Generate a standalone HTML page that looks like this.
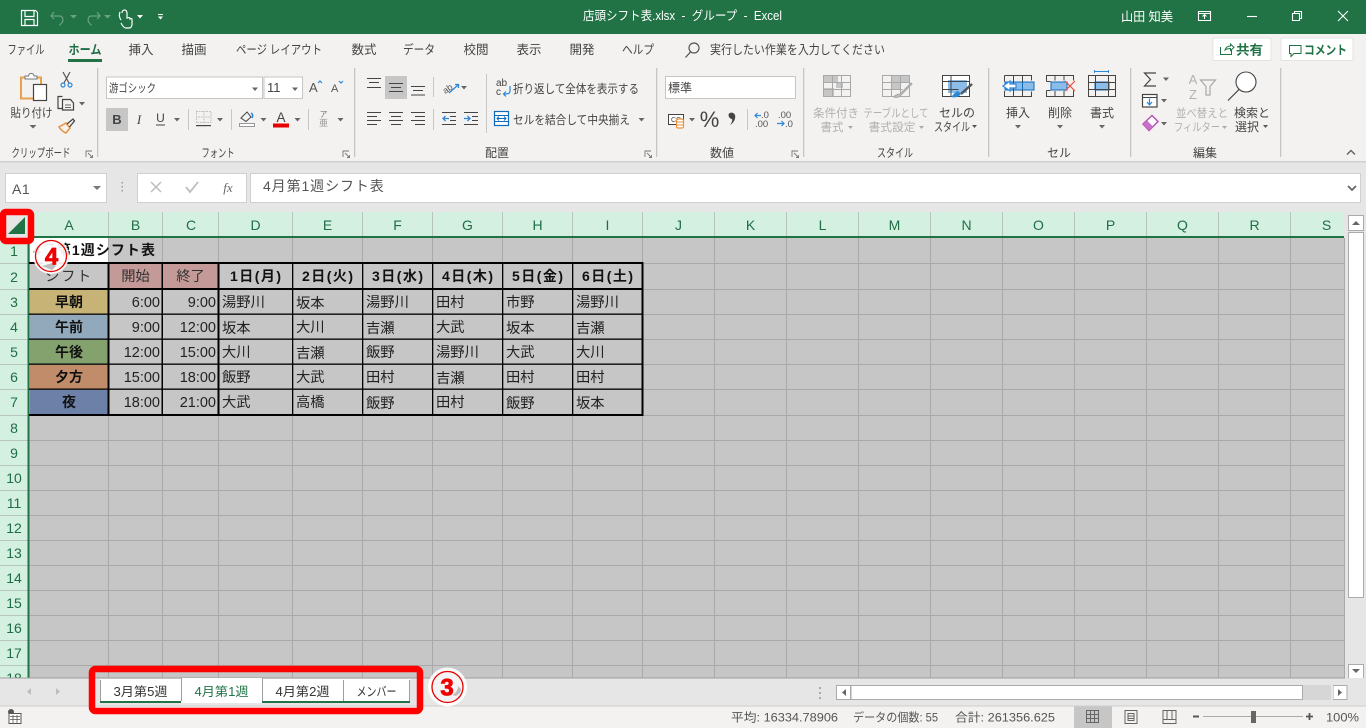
<!DOCTYPE html>
<html lang="ja"><head><meta charset="utf-8"><title>店頭シフト表.xlsx - グループ - Excel</title>
<style>
html,body{margin:0;padding:0;width:1366px;height:728px;overflow:hidden;background:#e6e6e6}
svg{display:block;font-family:"Liberation Sans","Noto Sans CJK JP",sans-serif}
.m{text-anchor:middle}.e{text-anchor:end}
.rb text{font-size:12px;fill:#444}
.g text{font-size:11.5px;fill:#b1b1b1}
.hd text{font-size:14px;fill:#1f6e45;text-anchor:middle}
.c text{font-size:14.3px;fill:#222}
.b text{font-weight:bold;fill:#111;text-anchor:middle}
.n text{font-size:14.5px;fill:#222;text-anchor:end}
.k{fill:none;stroke:#444;stroke-width:1.2}
.car{fill:#666}
</style></head><body>
<svg width="1366" height="728" viewBox="0 0 1366 728" xmlns="http://www.w3.org/2000/svg">
<!-- backgrounds -->
<rect width="1366" height="728" fill="#e6e6e6"/>
<rect width="1366" height="34" fill="#217346"/>
<rect y="34" width="1366" height="127" fill="#f3f2f1"/>
<rect y="161" width="1366" height="1" fill="#cfcfcf"/><rect y="162" width="1366" height="1" fill="#dcdcdc"/>

<!-- title bar -->
<g fill="none" stroke="#fff" stroke-width="1.2">
<path d="M21.5 10.5h14l2 2v13h-16zM25 10.5v6h9v-6M25 25.5v-6h9v6"/>
<path d="M54 12l-3 4 3 3M51.5 16h8c3 0 4 3 3 6l-3 3.5" stroke="#6aa283"/>
<path d="M97 12l3 4-3 3M99.5 16h-8c-3 0-4 3-3 6l3 3.5" stroke="#6aa283"/>
<path d="M122 13c0-4 5-4 5 0v5c3-1 3 0 3 1 2-1 2 0 2 1v4c0 2-1 4-3 4h-3c-2 0-4-3-5-5M120 12c-1 3-1 5 1 8"/>
</g>
<g fill="#6aa283"><path d="M70 15h7l-3.500 3.500zM104 15h7l-3.500 3.500z"/></g>
<g fill="#fff"><path d="M137 15h6l-3 3.500zM158 14h5v1h-5zM158 16.500h5l-2.500 3z"/></g>
<text x="583" y="20" font-size="12.500" fill="#fff" textLength="199" lengthAdjust="spacingAndGlyphs">店頭シフト表.xlsx&#160;&#160;-&#160;&#160;グループ&#160;&#160;-&#160;&#160;Excel</text>
<text x="1121" y="21" font-size="12.500" fill="#fff" textLength="52" lengthAdjust="spacingAndGlyphs">山田 知美</text>
<g fill="none" stroke="#fff" stroke-width="1.100">
<path d="M1198.500 11.500h12v9h-12zM1198.500 13.500h12M1204.500 19v-4M1202.500 16.500l2-2 2 2"/>
<path d="M1247 16.500h10"/>
<path d="M1292.500 13.500h7v7h-7zM1294.500 13.500v-2h7v7h-2"/>
<path d="M1338 11l10 10M1348 11l-10 10"/>
</g>

<!-- tabs -->
<g font-size="12.500" fill="#444">
<text x="26" y="54" class="m" textLength="37" lengthAdjust="spacingAndGlyphs">ファイル</text>
<text x="85" y="54" class="m" font-weight="bold" fill="#1f6e45" textLength="33" lengthAdjust="spacingAndGlyphs">ホーム</text>
<text x="141" y="54" class="m">挿入</text>
<text x="194" y="54" class="m">描画</text>
<text x="279" y="54" class="m" textLength="86" lengthAdjust="spacingAndGlyphs">ページ&#160;レイアウト</text>
<text x="364" y="54" class="m">数式</text>
<text x="419" y="54" class="m" textLength="32" lengthAdjust="spacingAndGlyphs">データ</text>
<text x="476" y="54" class="m">校閲</text>
<text x="529" y="54" class="m">表示</text>
<text x="582" y="54" class="m">開発</text>
<text x="638" y="54" class="m" textLength="32" lengthAdjust="spacingAndGlyphs">ヘルプ</text>
<text x="710" y="54" textLength="175" lengthAdjust="spacingAndGlyphs">実行したい作業を入力してください</text>
</g>
<rect x="68" y="59" width="34" height="3" fill="#217346"/>
<circle cx="694" cy="48" r="5" fill="none" stroke="#555" stroke-width="1.200"/><path d="M690.500 52l-5 5.500" stroke="#555" stroke-width="1.300"/>
<rect x="1213" y="38" width="58" height="22.500" rx="1.500" fill="#fff" stroke="#e4e3e2"/>
<rect x="1281" y="38" width="72" height="22.500" rx="1.500" fill="#fff" stroke="#e4e3e2"/>
<path d="M1220.500 47v7.500h11V50M1225 50c1-3 3-4 5.500-4V44l3.500 3.500-3.500 3v-2c-2 0-4 .5-5.500 1.500z" fill="none" stroke="#217346" stroke-width="1"/>
<text x="1236" y="54.500" font-size="13" font-weight="bold" fill="#217346" textLength="27" lengthAdjust="spacingAndGlyphs">共有</text>
<path d="M1289.500 45.500h11.500v8h-7l-3 3v-3h-1.500z" fill="none" stroke="#217346" stroke-width="1"/>
<text x="1304" y="54.500" font-size="12.500" font-weight="bold" fill="#217346" textLength="43" lengthAdjust="spacingAndGlyphs">コメント</text>

<!-- group separators -->
<g fill="#c6c6c6"><rect x="97" y="68" width="1.300" height="89"/><rect x="354" y="68" width="1.300" height="89"/><rect x="656" y="68" width="1.300" height="89"/><rect x="803" y="68" width="1.300" height="89"/><rect x="988" y="68" width="1.300" height="89"/><rect x="1130" y="68" width="1.300" height="89"/><rect x="1280" y="68" width="1.300" height="89"/>
<rect x="188" y="109" width="1" height="21"/><rect x="231" y="109" width="1" height="21"/><rect x="308" y="109" width="1" height="21"/><rect x="433" y="77" width="1" height="20"/><rect x="433" y="109" width="1" height="21"/><rect x="486" y="74" width="1" height="59"/><rect x="747" y="109" width="1" height="21"/></g>

<g class="rb">
<!-- group labels -->
<text x="41" y="157" class="m" textLength="59" lengthAdjust="spacingAndGlyphs">クリップボード</text>
<text x="218" y="157" class="m" textLength="33" lengthAdjust="spacingAndGlyphs">フォント</text>
<text x="497" y="157" class="m">配置</text>
<text x="722" y="157" class="m">数値</text>
<text x="895" y="157" class="m" textLength="36" lengthAdjust="spacingAndGlyphs">スタイル</text>
<text x="1059" y="157" class="m">セル</text>
<text x="1205" y="157" class="m">編集</text>
<!-- clipboard -->
<text x="31.500" y="117" class="m" textLength="42" lengthAdjust="spacingAndGlyphs">貼り付け</text>
<text x="513" y="93" textLength="126" lengthAdjust="spacingAndGlyphs">折り返して全体を表示する</text>
<text x="513" y="124" textLength="117" lengthAdjust="spacingAndGlyphs">セルを結合して中央揃え</text>
<text x="957" y="117" class="m">セルの</text>
<text x="952" y="131" class="m" textLength="36" lengthAdjust="spacingAndGlyphs">スタイル</text>
<text x="1018" y="117" class="m">挿入</text>
<text x="1060" y="117" class="m">削除</text>
<text x="1102" y="117" class="m">書式</text>
<text x="1252" y="117" class="m">検索と</text>
<text x="1247" y="131" class="m">選択</text>
</g>
<g class="g">
<text x="836" y="117" class="m" textLength="46" lengthAdjust="spacingAndGlyphs">条件付き</text>
<text x="832" y="131" class="m">書式</text>
<text x="896" y="117" class="m" textLength="65" lengthAdjust="spacingAndGlyphs">テーブルとして</text>
<text x="892" y="131" class="m" textLength="47" lengthAdjust="spacingAndGlyphs">書式設定</text>
<text x="1202" y="117" class="m" textLength="52" lengthAdjust="spacingAndGlyphs">並べ替えと</text>
<text x="1197" y="131" class="m" textLength="46" lengthAdjust="spacingAndGlyphs">フィルター</text>
</g>

<!-- paste icon -->
<path d="M21 77.500h20v21H21z" fill="#f3f2f1" stroke="#e8a04c" stroke-width="2"/>
<path d="M25 79v-3h3.500c.5-3.500 5-3.500 5.500 0H37v3z" fill="#fff" stroke="#777"/>
<rect x="33.500" y="84.500" width="13" height="16" fill="#fff" stroke="#444" stroke-width="1.200"/>
<!-- scissors -->
<path d="M63 72l6 11M70 72l-6 11" stroke="#555" fill="none" stroke-width="1.200"/>
<circle cx="63" cy="85" r="2" fill="none" stroke="#2b88d8" stroke-width="1.200"/><circle cx="70" cy="85" r="2" fill="none" stroke="#2b88d8" stroke-width="1.200"/>
<!-- copy -->
<path d="M62.500 96.500h-4.500v12h4M62.500 99.500v10.500h11v-7l-3-3.500z" fill="none" stroke="#444" stroke-width="1.200"/><path d="M65 105h6M65 107.500h6" stroke="#666"/>
<!-- painter -->
<path d="M59 127l7-4 4 5-4 5c-3-1-5-3-7-6z" fill="none" stroke="#e8923c" stroke-width="1.500"/>
<path d="M67 124l6-5 1.500 2-5 6" fill="none" stroke="#444" stroke-width="1.300"/>
<!-- font boxes -->
<rect x="106.500" y="77" width="156" height="21.500" fill="#fff" stroke="#c6c6c6"/>
<rect x="264" y="77" width="38.500" height="21.500" fill="#fff" stroke="#c6c6c6"/>
<text x="109" y="92" font-size="11.500" fill="#444" textLength="47" lengthAdjust="spacingAndGlyphs">游ゴシック</text>
<text x="267" y="92" font-size="13" fill="#444">11</text>
<text x="309" y="92" font-size="13" fill="#555">A</text><path d="M318 83l2-2 2 2" class="k" stroke-width="1" style="stroke:#2b88d8"/>
<text x="331" y="92" font-size="11" fill="#555">A</text><path d="M339 81l2 2 2-2" class="k" style="stroke:#2b88d8"/>
<rect x="106" y="108" width="22" height="23" fill="#c6c6c6"/>
<text x="117" y="124" class="m" font-size="13" font-weight="bold" fill="#444">B</text>
<text x="139" y="124" class="m" font-size="13" font-style="italic" fill="#444" font-family="Liberation Serif">I</text>
<text x="160.500" y="122" class="m" font-size="12" fill="#444">U</text><rect x="156" y="124.500" width="9" height="1" fill="#444"/>
<path d="M196.500 111.500h14.500v11h-14.500z" fill="none" stroke="#bbb" stroke-dasharray="1.500 1"/><path d="M204 111v12M196 117h15" stroke="#bbb" stroke-dasharray="1.500 1"/><rect x="196" y="125" width="15" height="1.200" fill="#444"/>
<path d="M241 118l6-6 4 5-5 4.500z" fill="none" stroke="#444"/><path d="M251 113c2 1 2 3 1 5" stroke="#2b88d8" fill="none" stroke-width="1.500"/><rect x="239.500" y="123.500" width="15" height="3" fill="#fff" stroke="#999"/>
<text x="281" y="122" class="m" font-size="13.500" fill="#444">A</text><rect x="273" y="123.500" width="16" height="4" fill="#e60000"/>
<text x="323.500" y="117" class="m" font-size="8" fill="#777">ア</text><text x="323.500" y="126" class="m" font-size="9" fill="#999">亜</text>
<!-- carets -->
<path class="car" d="M29.500 125h7l-3.500 3.500zM79 102h6l-3 3.500zM252 87.500h6l-3 3.500zM292 87.500h6l-3 3.500zM174 118h6l-3 3.500zM217 118h6l-3 3.500zM260.500 118h6l-3 3.500zM294.500 118h6l-3 3.500zM337.500 118h6l-3 3.500zM461 86h6l-3 3.500zM638.500 118h6l-3 3.500zM785 87.500h6l-3 3.500zM689 118h6l-3 3.500zM1015 125h6l-3 3.500zM1057 125h6l-3 3.500zM1099 125h6l-3 3.500zM1163 77.500h6l-3 3.500zM1161 99h6l-3 3.500zM1161 122h6l-3 3.500z"/>
<path fill="#aaa" d="M848 126h5l-2.500 3zM919 126h5l-2.500 3zM1222 126h5l-2.500 3z"/>
<path fill="#555" d="M972 125h5l-2.500 3zM1263 125h5l-2.500 3z"/>
<!-- align icons -->
<rect x="385" y="76" width="22" height="23" fill="#c6c6c6"/>
<path stroke="#444" stroke-width="1.100" fill="none" d="M367 78.500h14M369 82.500h10M367 87.500h14M389 83.500h14M391 87.500h10M389 91.500h14M411 86.500h14M413 90.500h10M411 95h14
M367 112.500h14M367 116.500h10M367 120.500h14M367 124.500h10M389 112.500h14M391 116.500h10M389 120.500h14M391 124.500h10M411 112.500h14M415 116.500h10M411 120.500h14M415 124.500h10
M442 112.500h14M450 116.500h6M450 120.500h6M442 124.500h14M464 112.500h14M472 116.500h6M472 120.500h6M464 124.500h14"/>
<path stroke="#2b88d8" stroke-width="1.300" fill="none" d="M449 118.500h-6M445.500 116l-2.500 2.500 2.500 2.500M464 118.500h6M467.500 116l2.500 2.500-2.500 2.500"/>
<text x="442" y="92" font-size="9" fill="#555" transform="rotate(-35 447 88)">ab</text><path d="M449 93l9-8M455 84.500h3.500V88" fill="none" stroke="#2b88d8" stroke-width="1.300"/>
<!-- wrap -->
<text x="496" y="86" font-size="10" fill="#444">ab</text><text x="496" y="95" font-size="10" fill="#444">c</text><path d="M510 86v5c0 3-3 3-6 3M506 91.500l-2.500 2.500 2.500 2.500" fill="none" stroke="#2b88d8" stroke-width="1.200"/>
<!-- merge -->
<rect x="494.500" y="111.500" width="14" height="14" fill="#fff" stroke="#0f6cbd" stroke-width="1.200"/><path d="M494.500 115.500h14M494.500 121.500h14" stroke="#0f6cbd"/><path d="M497 118.500h9M499 116.500l-2 2 2 2M504 116.500l2 2-2 2" fill="none" stroke="#0f6cbd"/>
<!-- number -->
<rect x="665.500" y="76.500" width="130" height="22" fill="#fff" stroke="#c6c6c6"/>
<text x="668" y="92" font-size="12" fill="#444">標準</text>
<rect x="668.500" y="114.500" width="15" height="10" fill="#fff" stroke="#444"/><text x="671" y="122" font-size="7" fill="#444">CC</text>
<rect x="676.500" y="119" width="7" height="9" rx="1.500" fill="#fff" stroke="#e8923c" stroke-width="1.200"/><path d="M676.500 122h7M676.500 125h7" stroke="#e8923c"/>
<text x="709.500" y="127" class="m" font-size="22" fill="#444">%</text>
<path d="M729 113.500c2-1.500 5-1 6 1.500 1 3-1 8-5 10 2-2.500 2.500-4.500 2-6-2 0-4.500-3-3-5.500z" fill="#444"/>
<text x="761" y="118" font-size="9.500" fill="#555">.0</text><text x="755" y="127" font-size="9.500" fill="#555">.00</text><path d="M761 115.500h-6M757.500 113l-2.500 2.500 2.500 2.500" stroke="#2b88d8" fill="none" stroke-width="1.200"/>
<text x="778" y="118" font-size="9.500" fill="#555">.00</text><text x="785" y="127" font-size="9.500" fill="#555">.0</text><path d="M777 123.500h7M781.500 121l2.500 2.500-2.500 2.500" stroke="#2b88d8" fill="none" stroke-width="1.200"/>
<!-- dialog launchers -->
<g fill="none" stroke="#777" stroke-width=".9"><path d="M86 157v-6h6M88 153l4 4M90 157.500h2.500V155"/><path d="M343 157v-6h6M345 153l4 4M347 157.500h2.500V155"/><path d="M645 157v-6h6M647 153l4 4M649 157.500h2.500V155"/><path d="M792 157v-6h6M794 153l4 4M796 157.500h2.500V155"/></g>
<!-- styles icons -->
<rect x="824" y="76" width="14" height="6" fill="#c6c6c6"/><rect x="824" y="88" width="10" height="8" fill="#c6c6c6"/><rect x="836" y="82" width="7" height="6" fill="#c6c6c6"/>
<path d="M823.500 75.500h27v21h-27zM823.500 82.500h27M823.500 89.500h27M832.500 75.500v21M841.500 75.500v21" fill="none" stroke="#a8a8a8"/>
<rect x="892" y="76" width="18" height="6" fill="#c6c6c6"/><rect x="892" y="82" width="9" height="7" fill="#c6c6c6"/>
<path d="M882.500 75.500h27v21h-27zM882.500 82.500h27M882.500 89.500h20M891.500 75.500v21M900.500 75.500v21" fill="none" stroke="#a8a8a8"/>
<path d="M911 83l-11 11c-2 0-5 1-6 3 3 1 6 0 8-3l10-10z" fill="#bdbdbd" stroke="#a8a8a8"/>
<rect x="942.500" y="75.500" width="27" height="21" fill="#fff" stroke="#444"/><rect x="948" y="80" width="19" height="13" fill="#8cbdea"/>
<path d="M942.500 81.500h27M942.500 89.500h16M951 75.500v21" stroke="#444" fill="none"/>
<path d="M972 84l-11 10" stroke="#555" stroke-width="2.500"/><path d="M958 91c-3 1-4 3-7 6 4 1 8 0 10-3z" fill="#2b88d8"/>
<!-- cell icons -->
<rect x="1005" y="82" width="29" height="8" fill="#8cbdea" stroke="#0f6cbd"/>
<path d="M1004.500 75.500h27v5M1004.500 91v5.500h27v-5M1013.500 75.500v21M1022.500 75.500v21M1004.500 75.500v6" fill="none" stroke="#444"/>
<path d="M1022.500 82v8" stroke="#0f6cbd"/>
<path d="M1003 86l7-5v3h6v4h-6v3z" fill="#fff" stroke="#2b88d8" stroke-width="1.200"/>
<rect x="1051" y="82" width="16" height="8" fill="#8cbdea" stroke="#0f6cbd"/>
<path d="M1046.500 81.500v-6h27v5M1046.500 90.500v6h27v-6M1046.500 81.500h4M1046.500 90.500h4M1055 75.500v5M1064 75.500v5M1055 91v6M1064 91v6" fill="none" stroke="#444"/>
<path d="M1065 81l10 10M1075 81l-10 10" stroke="#e74c3c" stroke-width="1.200"/>
<path d="M1094.500 71.500h14M1094.500 70v3M1108.500 70v3" stroke="#2b88d8"/>
<rect x="1095" y="82" width="14" height="8" fill="#8cbdea" stroke="#0f6cbd"/>
<path d="M1088.500 75.500h27v21h-27zM1088.500 82.500h27M1088.500 89.500h27M1095.500 75.500v21M1108.500 75.500v21" fill="none" stroke="#444"/>
<!-- editing -->
<path d="M1156 73h-11.500l6 6.500-6 6.500H1156" fill="none" stroke="#444" stroke-width="1.200"/>
<rect x="1142.500" y="94.500" width="14.500" height="12.500" fill="#fff" stroke="#444" stroke-width="1.200"/><path d="M1142 97.500h15" stroke="#444"/><path d="M1149.500 98.500v6M1147 102l2.500 3 2.500-3" fill="none" stroke="#2b88d8" stroke-width="1.200"/>
<path d="M1143 124l9-8.500 6 6-9 9z" fill="#fff" stroke="#b455b4" stroke-width="1.500"/><path d="M1143 124l4-3.500 6 6-4 4z" fill="#c86fc8"/>
<text x="1193" y="84" class="m" font-size="13" fill="#b1b1b1">A</text><text x="1193" y="99" class="m" font-size="13" fill="#b1b1b1">Z</text>
<path d="M1200.500 80h15l-5.500 6.500v8.500h-4v-8.500z" fill="none" stroke="#a8a8a8" stroke-width="1.200"/>
<circle cx="1246" cy="82" r="10" fill="#fff" stroke="#444" stroke-width="1.100"/><path d="M1239 89.500l-11 11" stroke="#444" stroke-width="1.200"/>
<path d="M1347 154.500l4-4 4 4" fill="none" stroke="#666" stroke-width="1.500"/>

<!-- formula bar -->
<rect x="5.500" y="173.500" width="101" height="29" fill="#fff" stroke="#d0d0d0"/>
<text x="12" y="194" font-size="14" fill="#555" letter-spacing=".5">A1</text>
<path d="M93 186h8l-4 4z" fill="#777"/>
<g fill="#9a9a9a"><rect x="121.500" y="182" width="1.500" height="1.500"/><rect x="121.500" y="186" width="1.500" height="1.500"/><rect x="121.500" y="190" width="1.500" height="1.500"/></g>
<rect x="137.500" y="173.500" width="109" height="29" fill="#fff" stroke="#d0d0d0"/>
<path d="M151 182l10 10M161 182l-10 10" stroke="#bdbdbd" stroke-width="1.500"/>
<path d="M186 187l4 5 8-10" fill="none" stroke="#bdbdbd" stroke-width="1.800"/>
<text x="228" y="192" class="m" font-size="13" font-style="italic" fill="#666" font-family="Liberation Serif">fx</text>
<rect x="250.500" y="173.500" width="1110" height="29" fill="#fff" stroke="#d0d0d0"/>
<text x="263" y="191" font-size="14" fill="#555" letter-spacing=".9">4月第1週シフト表</text>
<path d="M1348 186l4 4 4-4" fill="none" stroke="#666" stroke-width="1.800"/>

<!-- column header -->
<rect x="0" y="212" width="1344" height="24" fill="#d3f0e0"/>
<rect x="0" y="238" width="29" height="440" fill="#d3f0e0"/>
<rect x="29" y="238" width="1315" height="440" fill="#c6c6c6"/>
<rect x="0" y="212" width="29" height="24" fill="#e6e6e6"/>
<g fill="#a9a9a9">
<rect x="108" y="238" width="1" height="440"/><rect x="162" y="238" width="1" height="440"/><rect x="218" y="238" width="1" height="440"/><rect x="292" y="238" width="1" height="440"/><rect x="362" y="238" width="1" height="440"/><rect x="432" y="238" width="1" height="440"/><rect x="502" y="238" width="1" height="440"/><rect x="572" y="238" width="1" height="440"/><rect x="642" y="238" width="1" height="440"/><rect x="714" y="238" width="1" height="440"/><rect x="786" y="238" width="1" height="440"/><rect x="858" y="238" width="1" height="440"/><rect x="930" y="238" width="1" height="440"/><rect x="1002" y="238" width="1" height="440"/><rect x="1074" y="238" width="1" height="440"/><rect x="1146" y="238" width="1" height="440"/><rect x="1218" y="238" width="1" height="440"/><rect x="1290" y="238" width="1" height="440"/><rect x="1344" y="238" width="1" height="440"/>
<rect x="29" y="263" width="1315" height="1"/><rect x="29" y="289" width="1315" height="1"/><rect x="29" y="314" width="1315" height="1"/><rect x="29" y="339" width="1315" height="1"/><rect x="29" y="364" width="1315" height="1"/><rect x="29" y="389" width="1315" height="1"/><rect x="29" y="415" width="1315" height="1"/><rect x="29" y="440" width="1315" height="1"/><rect x="29" y="465" width="1315" height="1"/><rect x="29" y="490" width="1315" height="1"/><rect x="29" y="515" width="1315" height="1"/><rect x="29" y="540" width="1315" height="1"/><rect x="29" y="565" width="1315" height="1"/><rect x="29" y="590" width="1315" height="1"/><rect x="29" y="615" width="1315" height="1"/><rect x="29" y="640" width="1315" height="1"/><rect x="29" y="665" width="1315" height="1"/>
</g>
<g fill="#b9c4bd">
<rect x="108" y="212" width="1" height="24"/><rect x="162" y="212" width="1" height="24"/><rect x="218" y="212" width="1" height="24"/><rect x="292" y="212" width="1" height="24"/><rect x="362" y="212" width="1" height="24"/><rect x="432" y="212" width="1" height="24"/><rect x="502" y="212" width="1" height="24"/><rect x="572" y="212" width="1" height="24"/><rect x="642" y="212" width="1" height="24"/><rect x="714" y="212" width="1" height="24"/><rect x="786" y="212" width="1" height="24"/><rect x="858" y="212" width="1" height="24"/><rect x="930" y="212" width="1" height="24"/><rect x="1002" y="212" width="1" height="24"/><rect x="1074" y="212" width="1" height="24"/><rect x="1146" y="212" width="1" height="24"/><rect x="1218" y="212" width="1" height="24"/><rect x="1290" y="212" width="1" height="24"/>
<rect x="0" y="263" width="28" height="1"/><rect x="0" y="289" width="28" height="1"/><rect x="0" y="314" width="28" height="1"/><rect x="0" y="339" width="28" height="1"/><rect x="0" y="364" width="28" height="1"/><rect x="0" y="389" width="28" height="1"/><rect x="0" y="415" width="28" height="1"/><rect x="0" y="440" width="28" height="1"/><rect x="0" y="465" width="28" height="1"/><rect x="0" y="490" width="28" height="1"/><rect x="0" y="515" width="28" height="1"/><rect x="0" y="540" width="28" height="1"/><rect x="0" y="565" width="28" height="1"/><rect x="0" y="590" width="28" height="1"/><rect x="0" y="615" width="28" height="1"/><rect x="0" y="640" width="28" height="1"/><rect x="0" y="665" width="28" height="1"/>
</g>
<rect x="0" y="236" width="1344" height="2" fill="#217346"/>
<rect x="27.500" y="236" width="2" height="442" fill="#217346"/>
<g class="hd">
<text x="69" y="230">A</text><text x="135.500" y="230">B</text><text x="191" y="230">C</text><text x="255.500" y="230">D</text><text x="327.500" y="230">E</text><text x="397.500" y="230">F</text><text x="467.500" y="230">G</text><text x="537.500" y="230">H</text><text x="607.500" y="230">I</text><text x="678.500" y="230">J</text><text x="750.500" y="230">K</text><text x="822.500" y="230">L</text><text x="894.500" y="230">M</text><text x="966.500" y="230">N</text><text x="1038.500" y="230">O</text><text x="1110.500" y="230">P</text><text x="1182.500" y="230">Q</text><text x="1254.500" y="230">R</text><text x="1326.500" y="230">S</text>
<text x="14" y="256">1</text><text x="14" y="282">2</text><text x="14" y="307">3</text><text x="14" y="332">4</text><text x="14" y="357">5</text><text x="14" y="382">6</text><text x="14" y="407">7</text><text x="14" y="433">8</text><text x="14" y="458">9</text><text x="14" y="483">10</text><text x="14" y="508">11</text><text x="14" y="533">12</text><text x="14" y="558">13</text><text x="14" y="583">14</text><text x="14" y="608">15</text><text x="14" y="633">16</text><text x="14" y="658">17</text><text x="14" y="683">18</text>
</g>

<!-- table cells -->
<rect x="30" y="238" width="78" height="25" fill="#fff"/>
<rect x="109" y="264" width="109" height="25" fill="#c49a98"/>
<rect x="30" y="290" width="78" height="24" fill="#c8b377"/>
<rect x="30" y="315" width="78" height="24" fill="#92a8bb"/>
<rect x="30" y="340" width="78" height="24" fill="#84a26d"/>
<rect x="30" y="365" width="78" height="24" fill="#c08c69"/>
<rect x="30" y="390" width="78" height="25" fill="#6d81a8"/>
<text x="33" y="255" font-size="14" font-weight="bold" fill="#111" letter-spacing="1.050">4月第1週シフト表</text>
<g fill="#000">
<rect x="29" y="262" width="613" height="2"/><rect x="29" y="288" width="613" height="2"/>
<rect x="29" y="313.500" width="613" height="1.300"/><rect x="29" y="338.500" width="613" height="1.300"/><rect x="29" y="363.500" width="613" height="1.300"/><rect x="29" y="388.500" width="613" height="1.300"/>
<rect x="29" y="414" width="614" height="2"/>
<rect x="107.500" y="263" width="2" height="152"/><rect x="161.500" y="263" width="1.500" height="152"/><rect x="217.500" y="263" width="2" height="152"/>
<rect x="292" y="263" width="1.300" height="152"/><rect x="362" y="263" width="1.300" height="152"/><rect x="432" y="263" width="1.300" height="152"/><rect x="502" y="263" width="1.300" height="152"/><rect x="572" y="263" width="1.300" height="152"/>
<rect x="641.500" y="262" width="2" height="154"/>
</g>
<text x="69" y="281" class="m" font-size="14.300" fill="#333" letter-spacing="1.500">シフト</text>
<text x="135.500" y="281" class="m" font-size="14.300" fill="#333">開始</text>
<text x="190.500" y="281" class="m" font-size="14.300" fill="#333">終了</text>
<g class="b" font-size="14">
<text x="69" y="307">早朝</text><text x="69" y="332">午前</text><text x="69" y="357">午後</text><text x="69" y="382">夕方</text><text x="69" y="407">夜</text>
<text x="255.500" y="281" textLength="51">1日(月)</text><text x="327.500" y="281" textLength="51">2日(火)</text><text x="397.500" y="281" textLength="51">3日(水)</text><text x="467.500" y="281" textLength="51">4日(木)</text><text x="537.500" y="281" textLength="51">5日(金)</text><text x="607.500" y="281" textLength="51">6日(土)</text>
</g>
<g class="n">
<text x="160" y="307">6:00</text><text x="216" y="307">9:00</text>
<text x="160" y="332">9:00</text><text x="216" y="332">12:00</text>
<text x="160" y="357">12:00</text><text x="216" y="357">15:00</text>
<text x="160" y="382">15:00</text><text x="216" y="382">18:00</text>
<text x="160" y="407">18:00</text><text x="216" y="407">21:00</text>
</g>
<g class="c">
<text x="222" y="307" fill="#444">湯野川</text><text x="296" y="308">坂本</text><text x="366" y="307" fill="#444">湯野川</text><text x="436" y="307" fill="#444">田村</text><text x="506" y="307" fill="#444">市野</text><text x="576" y="307" fill="#444">湯野川</text>
<text x="222" y="333">坂本</text><text x="296" y="332" fill="#444">大川</text><text x="366" y="333">吉瀬</text><text x="436" y="332" fill="#444">大武</text><text x="506" y="333">坂本</text><text x="576" y="333">吉瀬</text>
<text x="222" y="357" fill="#444">大川</text><text x="296" y="358">吉瀬</text><text x="366" y="357" fill="#444">飯野</text><text x="436" y="357" fill="#444">湯野川</text><text x="506" y="357" fill="#444">大武</text><text x="576" y="357" fill="#444">大川</text>
<text x="222" y="382">飯野</text><text x="296" y="382" fill="#444">大武</text><text x="366" y="382" fill="#444">田村</text><text x="436" y="383">吉瀬</text><text x="506" y="382" fill="#444">田村</text><text x="576" y="382" fill="#444">田村</text>
<text x="222" y="407" fill="#444">大武</text><text x="296" y="407" fill="#444">高橋</text><text x="366" y="408">飯野</text><text x="436" y="407" fill="#444">田村</text><text x="506" y="408">飯野</text><text x="576" y="408">坂本</text>
</g>

<!-- vertical scrollbar -->
<rect x="1345" y="212" width="21" height="466" fill="#e6e6e6"/>
<rect x="1348.500" y="215.500" width="15" height="15" fill="#fff" stroke="#ababab"/>
<path d="M1352 225l4-4 4 4z" fill="#666"/>
<rect x="1348.500" y="232.500" width="15" height="365" fill="#fff" stroke="#ababab"/>
<rect x="1348.500" y="664.500" width="15" height="14" fill="#fff" stroke="#ababab"/>
<path d="M1352 669h8l-4 4z" fill="#666"/>

<!-- sheet tab bar -->
<rect x="0" y="678" width="1366" height="28" fill="#e6e6e6"/>
<rect x="0" y="677.500" width="1345" height="1" fill="#9e9e9e"/>
<path d="M31 688v7l-4-3.500zM56 688v7l4-3.500z" fill="#bdbdbd"/>
<rect x="100" y="679" width="310" height="23" fill="#fff"/>
<rect x="100" y="701" width="310" height="2" fill="#217346"/>
<rect x="181" y="678" width="81" height="25" fill="#fff"/>
<rect x="181" y="678" width="1" height="23" fill="#9e9e9e"/><rect x="262" y="678" width="1" height="23" fill="#9e9e9e"/><rect x="343" y="680" width="1" height="21" fill="#9e9e9e"/><rect x="100" y="680" width="1" height="21" fill="#9e9e9e"/><rect x="409" y="680" width="1" height="21" fill="#9e9e9e"/>
<g font-size="12.500" fill="#333"><text x="140.500" y="696" class="m" textLength="54" lengthAdjust="spacingAndGlyphs">3月第5週</text><text x="221.500" y="696" class="m" fill="#217346" textLength="54" lengthAdjust="spacingAndGlyphs">4月第1週</text><text x="302.500" y="696" class="m" textLength="54" lengthAdjust="spacingAndGlyphs">4月第2週</text><text x="376.500" y="696" class="m" textLength="40" lengthAdjust="spacingAndGlyphs">メンバー</text></g>
<g fill="#aaa"><rect x="819" y="687" width="2" height="2"/><rect x="819" y="692" width="2" height="2"/><rect x="819" y="697" width="2" height="2"/></g>
<rect x="836" y="685" width="510" height="15" fill="#d6d6d6"/>
<rect x="836.500" y="685.500" width="14" height="14" fill="#fff" stroke="#ababab"/><path d="M846 689v7l-4-3.500z" fill="#666"/>
<rect x="851" y="685.500" width="451.500" height="14" fill="#fff" stroke="#ababab"/>
<rect x="1333" y="685.500" width="14" height="14" fill="#fff" stroke="#ababab"/><path d="M1338 689v7l4-3.500z" fill="#666"/>
<rect x="1331" y="685" width="2" height="15" fill="#e6e6e6"/>

<!-- status bar -->
<rect x="0" y="706" width="1366" height="22" fill="#f3f2f1"/>
<rect x="0" y="705.500" width="1366" height="1" fill="#cfcfcf"/>
<circle cx="11" cy="712" r="3" fill="#555"/><path d="M9 713.500h12v10H9z" fill="#fff" stroke="#555"/><path d="M10 716.500h10M10 719.500h10M13 715v8M17 715v8" stroke="#555" stroke-width=".8"/>
<g font-size="12" fill="#555">
<text x="731" y="721.500" textLength="107" lengthAdjust="spacingAndGlyphs">平均: 16334.78906</text>
<text x="853" y="721.500" textLength="85" lengthAdjust="spacingAndGlyphs">データの個数: 55</text>
<text x="955" y="721.500" textLength="100" lengthAdjust="spacingAndGlyphs">合計: 261356.625</text>
<text x="1326" y="721.500" textLength="33" lengthAdjust="spacingAndGlyphs">100%</text>
</g>
<rect x="1074" y="706.500" width="38" height="21.500" fill="#c6c6c6"/>
<path d="M1086.500 710.500h12v12h-12zM1086.500 714.500h12M1086.500 718.500h12M1090.500 710.500v12M1094.500 710.500v12" fill="none" stroke="#666"/>
<path d="M1125 710.500h12v13h-12zM1128 713.500h6v7h-6zM1128 716h6M1128 718.500h6" fill="none" stroke="#666"/>
<path d="M1163 710.500h13v13h-13zM1163 719.500h13M1167 710.500v9M1172 710.500v9" fill="none" stroke="#666" style="stroke-width:1"/>
<rect x="1193" y="715.500" width="6" height="2" fill="#555"/>
<rect x="1203" y="716" width="100" height="1" fill="#aaa"/>
<rect x="1251" y="711" width="5" height="12" fill="#666"/>
<path d="M1306 716.500h7M1309.500 713v7" stroke="#555" stroke-width="1.800"/>

<!-- annotations (topmost) -->
<rect x="92" y="669" width="328" height="42" rx="3.500" fill="none" stroke="#ff0000" stroke-width="6.500"/>
<circle cx="447.500" cy="687" r="19.500" fill="#fff" opacity=".9"/>
<circle cx="447.500" cy="687" r="15.500" fill="#f4f4f4" stroke="#e60000" stroke-width="1.300"/>
<path d="M452 695c4-2 6-5 6-9l3 3c0 3-2 5-5 7z" fill="#bdbdbd"/>
<text x="447" y="695.500" class="m" font-size="24" font-weight="bold" fill="#f00000" stroke="#f00000" stroke-width=".8">3</text>

<rect x="3" y="212" width="28" height="29" rx="3" fill="#e6e6e6" stroke="#ff0000" stroke-width="6.500"/>
<path d="M8 234l17-17v17z" fill="#217346"/>
<circle cx="51" cy="256" r="18" fill="#fff" opacity=".88"/>
<circle cx="51" cy="256" r="15.500" fill="#fff" fill-opacity=".35" stroke="#e60000" stroke-width="1.300"/>
<circle cx="51" cy="256" r="10.500" fill="#fff" fill-opacity=".9"/>
<path d="M42 266l10-3 4 3-4 4z" fill="#bdbdbd"/>
<text x="51.500" y="264.500" class="m" font-size="24" font-weight="bold" fill="#f00000" stroke="#f00000" stroke-width=".8">4</text>
</svg>
</body></html>
